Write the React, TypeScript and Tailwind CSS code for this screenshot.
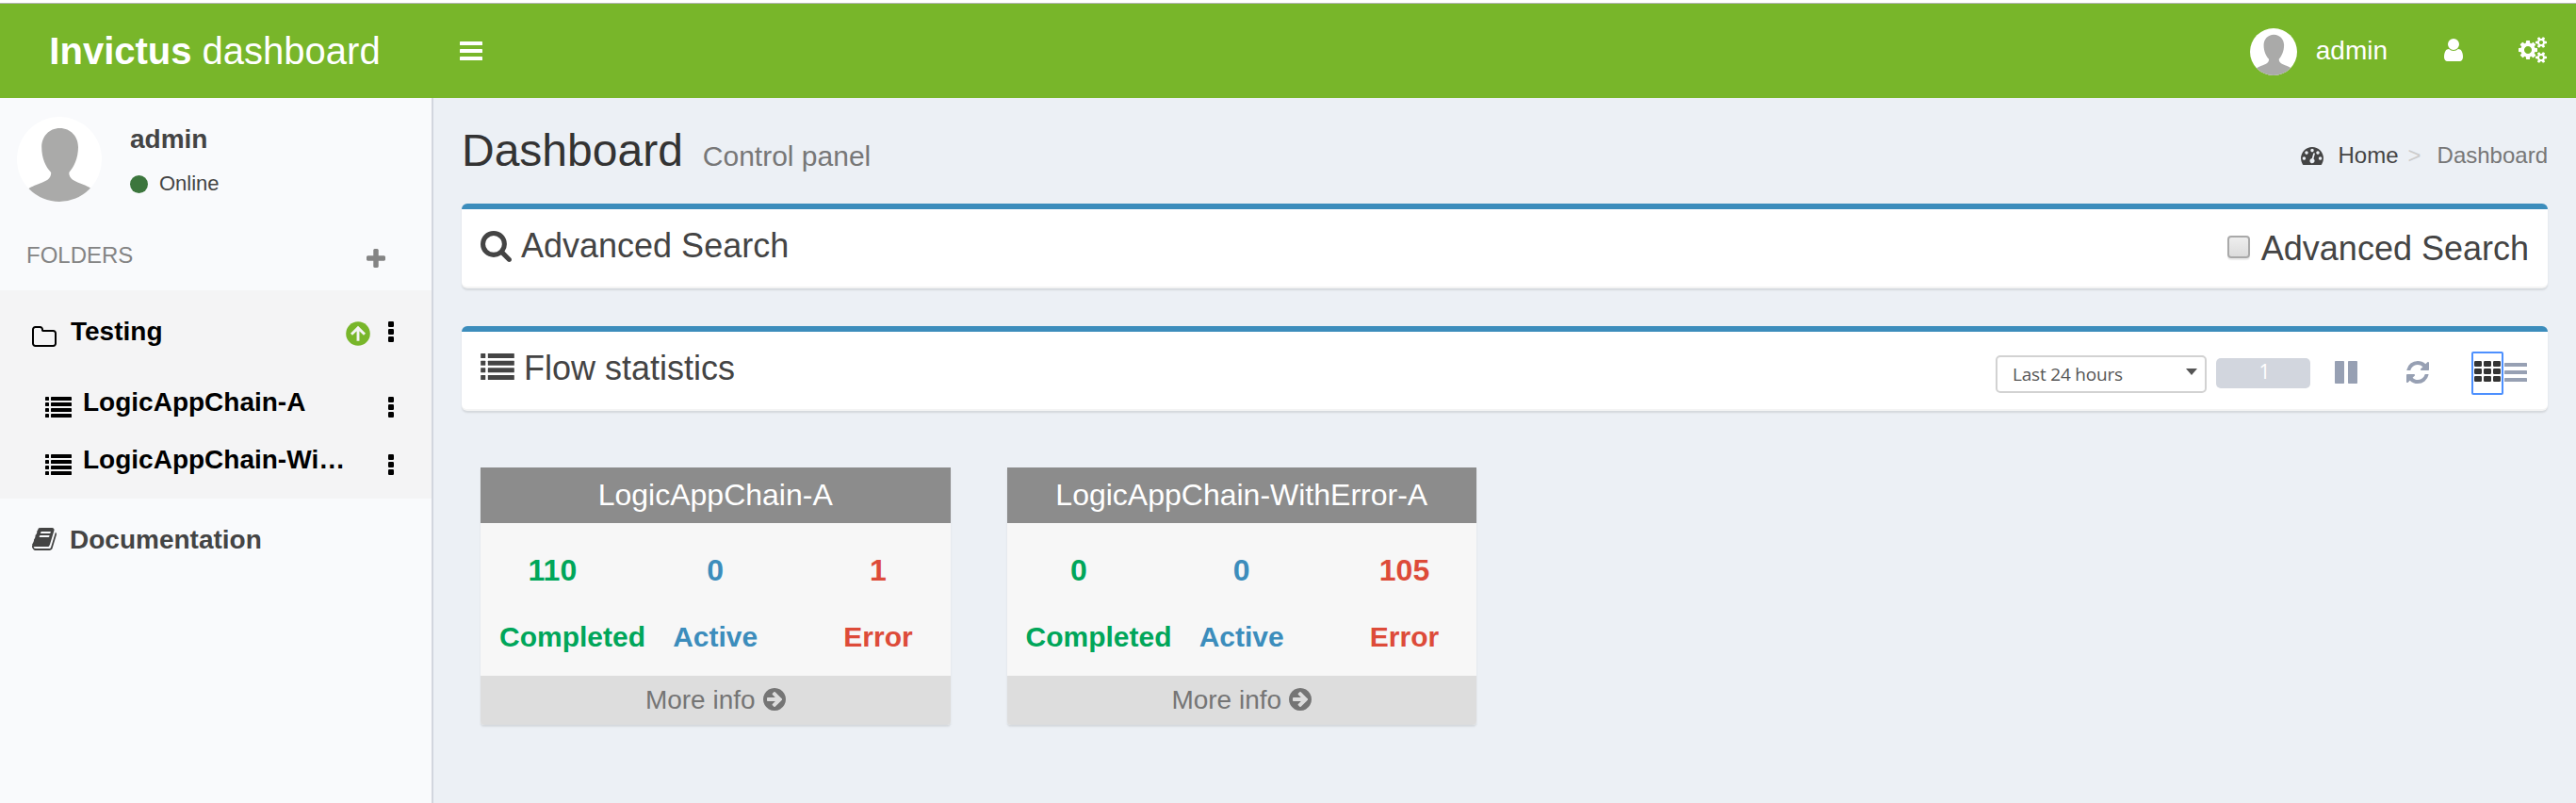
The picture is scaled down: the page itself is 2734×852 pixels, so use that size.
import React from "react";

type IconProps = { className: string };

const Bars = ({ className }: IconProps) => (
  <svg viewBox="0 0 24 20" className={className} fill="currentColor">
    <rect width="24" height="4" rx="0.6" />
    <rect y="8" width="24" height="4" rx="0.6" />
    <rect y="16" width="24" height="4" rx="0.6" />
  </svg>
);

const Search = ({ className }: IconProps) => (
  <svg viewBox="64 128 1664 1664" className={className} fill="currentColor">
    <path d="M1216 832q0-185-131.5-316.5t-316.5-131.5-316.5 131.5-131.5 316.5 131.5 316.5 316.5 131.5 316.5-131.5 131.5-316.5zm512 832q0 52-38 90t-90 38q-54 0-90-38l-343-342q-179 124-399 124-143 0-273.5-55.5t-225-150-150-225-55.5-273.5 55.5-273.5 150-225 225-150 273.5-55.5 273.5 55.5 225 150 150 225 55.5 273.5q0 220-124 399l343 343q37 37 37 90z" />
  </svg>
);

const User = ({ className }: IconProps) => (
  <svg viewBox="256 128 1280 1536" className={className} fill="currentColor">
    <path d="M1536 1399q0 109-62.5 187t-150.5 78h-854q-88 0-150.5-78t-62.5-187q0-85 8.5-160.5t31.5-152 58.5-131 94-89 134.5-34.5q131 128 313 128t313-128q76 0 134.5 34.5t94 89 58.5 131 31.5 152 8.5 160.5zm-256-887q0 159-112.5 271.5t-271.5 112.5-271.5-112.5-112.5-271.5 112.5-271.5 271.5-112.5 271.5 112.5 112.5 271.5z" />
  </svg>
);

const Cogs = ({ className }: IconProps) => (
  <svg viewBox="-64 0 1920 1792" className={className} fill="currentColor">
    <path d="M832 896q0-106-75-181t-181-75-181 75-75 181 75 181 181 75 181-75 75-181zm768 512q0-52-38-90t-90-38-90 38-38 90q0 53 37.5 90.5t90.5 37.5 90.5-37.5 37.5-90.5zm0-1024q0-52-38-90t-90-38-90 38-38 90q0 53 37.5 90.5t90.5 37.5 90.5-37.5 37.5-90.5zm-384 421v185q0 10-7 19.5t-16 10.5l-155 24q-11 35-32 76 34 48 90 115 7 11 7 20 0 12-7 19-23 30-82.5 89.5t-78.5 59.5q-11 0-21-7l-115-90q-37 19-77 31-11 108-23 155-7 24-30 24h-186q-11 0-20-7.5t-10-17.5l-23-153q-34-10-75-31l-118 89q-7 7-20 7-11 0-21-8-144-133-144-160 0-9 7-19 10-14 41-53t47-61q-23-44-35-82l-152-24q-10-1-17-9.5t-7-19.5v-185q0-10 7-19.5t16-10.5l155-24q11-35 32-76-34-48-90-115-7-11-7-20 0-12 7-20 22-30 82-89t79-59q11 0 21 7l115 90q34-18 77-32 11-108 23-154 7-24 30-24h186q11 0 20 7.5t10 17.5l23 153q34 10 75 31l118-89q8-7 20-7 11 0 21 8 144 133 144 160 0 8-7 19-12 16-42 54t-45 60q23 48 34 82l152 23q10 2 17 10.5t7 19.5zm640 533v140q0 16-149 31-12 27-30 52 51 113 51 138 0 4-4 7-122 71-124 71-8 0-46-47t-52-68q-20 2-30 2t-30-2q-14 21-52 68t-46 47q-2 0-124-71-4-3-4-7 0-25 51-138-18-25-30-52-149-15-149-31v-140q0-16 149-31 13-29 30-52-51-113-51-138 0-4 4-7 4-2 35-20t59-34 30-16q8 0 46 46.5t52 67.5q20-2 30-2t30 2q51-71 92-112l6-2q4 0 124 70 4 3 4 7 0 25-51 138 17 23 30 52 149 15 149 31zm0-1024v140q0 16-149 31-12 27-30 52 51 113 51 138 0 4-4 7-122 71-124 71-8 0-46-47t-52-68q-20 2-30 2t-30-2q-14 21-52 68t-46 47q-2 0-124-71-4-3-4-7 0-25 51-138-18-25-30-52-149-15-149-31v-140q0-16 149-31 13-29 30-52-51-113-51-138 0-4 4-7 4-2 35-20t59-34 30-16q8 0 46 46.5t52 67.5q20-2 30-2t30 2q51-71 92-112l6-2q4 0 124 70 4 3 4 7 0 25-51 138 17 23 30 52 149 15 149 31z" />
  </svg>
);

const Plus = ({ className }: IconProps) => (
  <svg viewBox="192 128 1408 1408" className={className} fill="currentColor">
    <path d="M1600 736v192q0 40-28 68t-68 28h-416v416q0 40-28 68t-68 28h-192q-40 0-68-28t-28-68v-416h-416q-40 0-68-28t-28-68v-192q0-40 28-68t68-28h416v-416q0-40 28-68t68-28h192q40 0 68 28t28 68v416h416q40 0 68 28t28 68z" />
  </svg>
);

const Folder = ({ className }: IconProps) => (
  <svg viewBox="64 128 1664 1408" className={className} fill="currentColor">
    <path d="M1600 1312v-704q0-40-28-68t-68-28h-704q-40 0-68-28t-28-68v-64q0-40-28-68t-68-28h-320q-40 0-68 28t-28 68v960q0 40 28 68t68 28h1216q40 0 68-28t28-68zm128-704v704q0 92-66 158t-158 66h-1216q-92 0-158-66t-66-158v-960q0-92 66-158t158-66h320q92 0 158 66t66 158v32h672q92 0 158 66t66 158z" />
  </svg>
);

const Dots = ({ className }: IconProps) => (
  <svg viewBox="0 0 6 22" className={className} fill="currentColor">
    <rect width="6" height="6" rx="1.2" />
    <rect y="8" width="6" height="6" rx="1.2" />
    <rect y="16" width="6" height="6" rx="1.2" />
  </svg>
);

const List = ({ className }: IconProps) => (
  <svg viewBox="0 0 28 22" className={className} fill="currentColor">
    {[0, 6, 12, 18].map((y) => (
      <g key={y}>
        <rect y={y} width="4" height="4" rx="0.4" />
        <rect x="6" y={y} width="22" height="4" rx="0.4" />
      </g>
    ))}
  </svg>
);

const Book = ({ className }: IconProps) => (
  <svg viewBox="64 128 1664 1536" className={className} fill="currentColor">
    <path d="M1703 478q40 57 18 129l-275 906q-19 64-76.5 107.5t-122.5 43.5h-923q-77 0-148.5-53.5t-99.5-131.5q-24-67-2-127 0-4 3-27t4-37q1-8-3-21.5t-3-19.5q2-11 8-21t16.5-23.5 16.5-23.5q23-38 45-91.5t30-91.5q3-10 .5-30t-.5-28q3-11 17-28t17-23q21-36 42-92t25-90q1-9-2.5-32t.5-28q4-13 22-30.5t22-22.5q19-26 42.5-84.5t27.5-96.5q1-8-3-25.5t-2-26.5q2-8 9-18t18-23 17-21q8-12 16.5-30.5t15-35 16-36 19.5-32 26.5-23.5 36-11.5 47.5 5.5l-1 3q38-9 51-9h761q74 0 114 56t18 130l-274 906q-36 119-71.5 153.5t-128.5 34.5h-869q-27 0-38 15-11 16-1 43 24 70 144 70h923q29 0 56-15.5t35-41.5l300-987q7-22 5-57 38 15 59 43zm-1064 2q-4 13 2 22.5t20 9.5h608q13 0 25.5-9.5t16.5-22.5l21-64q4-13-2-22.5t-20-9.5h-608q-13 0-25.5 9.5t-16.5 22.5zm-83 256q-4 13 2 22.5t20 9.5h608q13 0 25.5-9.5t16.5-22.5l21-64q4-13-2-22.5t-20-9.5h-608q-13 0-25.5 9.5t-16.5 22.5z" />
  </svg>
);

const Gauge = ({ className }: IconProps) => (
  <svg viewBox="0 256 1792 1408" className={className} fill="currentColor">
    <path d="M384 1152q0-53-37.5-90.5t-90.5-37.5-90.5 37.5-37.5 90.5 37.5 90.5 90.5 37.5 90.5-37.5 37.5-90.5zm192-448q0-53-37.5-90.5t-90.5-37.5-90.5 37.5-37.5 90.5 37.5 90.5 90.5 37.5 90.5-37.5 37.5-90.5zm428 481l101-382q6-26-7.5-48.5t-38.5-29.5-48 6.5-30 39.5l-101 382q-60 5-107 43.5t-63 98.5q-20 77 20 146t117 89 146-20 89-117q16-60-6-117t-72-91zm660-33q0-53-37.5-90.5t-90.5-37.5-90.5 37.5-37.5 90.5 37.5 90.5 90.5 37.5 90.5-37.5 37.5-90.5zm-640-640q0-53-37.5-90.5t-90.5-37.5-90.5 37.5-37.5 90.5 37.5 90.5 90.5 37.5 90.5-37.5 37.5-90.5zm448 192q0-53-37.5-90.5t-90.5-37.5-90.5 37.5-37.5 90.5 37.5 90.5 90.5 37.5 90.5-37.5 37.5-90.5zm320 448q0 261-141 483-19 29-54 29h-1402q-35 0-54-29-141-221-141-483 0-182 71-348t191-286 286-191 348-71 348 71 286 191 191 286 71 348z" />
  </svg>
);

const Pause = ({ className }: IconProps) => (
  <svg viewBox="0 0 24 24" className={className} fill="currentColor">
    <rect width="10" height="24" rx="0.8" />
    <rect x="14" width="10" height="24" rx="0.8" />
  </svg>
);

const Refresh = ({ className }: IconProps) => (
  <svg viewBox="128 128 1536 1536" className={className} fill="currentColor">
    <path d="M1639 1056q0 5-1 7-64 268-268 434.5t-478 166.5q-146 0-282.5-55t-243.5-157l-129 129q-19 19-45 19t-45-19-19-45v-448q0-26 19-45t45-19h448q26 0 45 19t19 45-19 45l-137 137q71 66 161 102t187 36q134 0 250-65t186-179q11-17 53-117 8-23 30-23h192q13 0 22.5 9.5t9.5 22.5zm25-800v448q0 26-19 45t-45 19h-448q-26 0-45-19t-19-45 19-45l138-138q-148-137-349-137-134 0-250 65t-186 179q-11 17-53 117-8 23-30 23h-199q-13 0-22.5-9.5t-9.5-22.5v-7q65-268 270-434.5t480-166.5q146 0 284 55.5t245 156.5l130-129q19-19 45-19t45 19 19 45z" />
  </svg>
);

const Tiles = ({ className }: IconProps) => (
  <svg viewBox="0 0 28 22" className={className} fill="currentColor">
    {[0, 8, 16].map((y) =>
      [0, 10, 20].map((x) => <rect key={`${x}-${y}`} x={x} y={y} width="8" height="6" rx="1.2" />)
    )}
  </svg>
);

const ArrowCircleRight = ({ className }: IconProps) => (
  <svg viewBox="128 128 1536 1536" className={className} fill="currentColor">
    <path
      transform="rotate(90 896 896)"
      d="M1412 895q0-27-18-45l-362-362-91-91q-18-18-45-18t-45 18l-91 91-362 362q-18 18-18 45t18 45l91 91q18 18 45 18t45-18l189-189v502q0 26 19 45t45 19h128q26 0 45-19t19-45v-502l189 189q19 19 45 19t45-19l91-91q18-18 18-45zm252 1q0 209-103 385.5t-279.5 279.5-385.5 103-385.5-103-279.5-279.5-103-385.5 103-385.5 279.5-279.5 385.5-103 385.5 103 279.5 279.5 103 385.5z"
    />
  </svg>
);

const ArrowCircleUp = ({ className }: IconProps) => (
  <svg viewBox="0 0 26 26" className={className}>
    <circle cx="13" cy="13" r="12.8" fill="#78b62a" />
    <path d="M13 20.800V7.500M6 13.800L13 6.900l7 6.900" fill="none" stroke="#f4f4f5" strokeWidth="2.900" />
  </svg>
);

const Avatar = ({ className }: IconProps) => (
  <svg viewBox="0 0 90 90" className={className}>
    <defs>
      <clipPath id="avatar-clip">
        <circle cx="45" cy="45" r="45" />
      </clipPath>
    </defs>
    <g clipPath="url(#avatar-clip)">
      <rect width="90" height="90" fill="#fff" />
      <path
        d="M45.500 12C57 12 65 21 65 32C65 44 60.500 53 55.300 59C55 66 62 68.500 67 70.500C72 72.500 78 74.500 80 77.500V90H11V77.500C13 74.500 20 72.500 24.500 70.500C30 68.500 36.500 66 36.200 59C30.500 53 26.200 44 26.200 32C26.200 21 34 12 45.500 12Z"
        fill="#aaaaa9"
      />
    </g>
  </svg>
);

type FlowItem = { name: string; completed: number; active: number; error: number };

const flows: FlowItem[] = [
  { name: "LogicAppChain-A", completed: 110, active: 0, error: 1 },
  { name: "LogicAppChain-WithError-A", completed: 0, active: 0, error: 105 },
];

function Stat({ value, label, color }: { value: number; label: string; color: string }) {
  return (
    <div className={`w-[172.800px] px-[30px] font-bold whitespace-nowrap ${color}`}>
      <div className="flex justify-center text-[32px] leading-[36px]">{value}</div>
      <div className="mt-[36px] flex justify-center-safe text-[30px] leading-[34px]">{label}</div>
    </div>
  );
}

function FlowCard({ flow }: { flow: FlowItem }) {
  return (
    <article className="w-[498.500px] overflow-hidden rounded-b-[4px] bg-[#f7f7f7] shadow-[0_2px_2px_rgba(0,0,0,0.1)]">
      <h3 className="h-[59px] bg-[#8c8c8c] pt-[11px] text-center text-[32px] leading-[36px] text-white">{flow.name}</h3>
      <div className="-mx-[10px] flex h-[162px] pt-[32px]">
        <Stat value={flow.completed} label="Completed" color="text-[#00a65a]" />
        <Stat value={flow.active} label="Active" color="text-[#3c8dbc]" />
        <Stat value={flow.error} label="Error" color="text-[#dd4b39]" />
      </div>
      <a className="flex h-[52px] items-start justify-center gap-[8px] bg-[#ddd] pt-[10px] text-[28px] leading-[32px] text-[#757575]">
        More info
        <ArrowCircleRight className="mt-[3px] h-[24px] w-[24px]" />
      </a>
    </article>
  );
}

function ChainRow({ label }: { label: string }) {
  return (
    <li className="flex h-[61px] items-start pt-px pr-[40px] pl-[48px]">
      <List className="mt-[10px] h-[22px] w-[28px]" />
      <span className="ml-[12px] grow text-[28px] leading-[32px]">{label}</span>
      <Dots className="mt-[10px] h-[22px] w-[6px]" />
    </li>
  );
}

export default function App() {
  return (
    <div className="flex h-[852px] w-[2734px] flex-col overflow-hidden bg-[#ecf0f5] font-['Liberation_Sans',Arial,sans-serif] text-[#444]">
      <div className="h-[4px] shrink-0 border-b border-[#b4b4b4] bg-white" />
      <header className="flex h-[100px] shrink-0 items-center bg-[#78b62a] text-white">
        <div className="w-[456px] text-center text-[40px] leading-[100px]">
          <b>Invictus</b> dashboard
        </div>
        <Bars className="ml-[32px] h-[20px] w-[24px]" />
        <div className="ml-auto flex items-center pr-[31px]">
          <Avatar className="mt-[2px] h-[50px] w-[50px]" />
          <span className="ml-[20px] text-[28px] leading-[40px]">admin</span>
          <User className="ml-[60px] h-[24px] w-[20px] -translate-y-px" />
          <Cogs className="ml-[59px] h-[28px] w-[30px] -translate-y-px" />
        </div>
      </header>

      <div className="flex grow">
        <aside className="w-[460px] shrink-0 border-r-2 border-[#d2d6de] bg-[#f9fafc]">
          <div className="flex h-[142px] pt-[20px] pl-[18px]">
            <Avatar className="h-[90px] w-[90px]" />
            <div className="ml-[30px] pt-[8px]">
              <p className="text-[28px] leading-[32px] font-bold">admin</p>
              <p className="mt-[18px] flex items-center text-[22px] leading-[26px]">
                <span className="mr-[12px] h-[19px] w-[19px] rounded-full bg-[#3c763d]" />
                Online
              </p>
            </div>
          </div>
          <div className="flex h-[62px] items-start justify-between pr-[49px] pl-[28px] pt-[11px] text-[24px] leading-[28px] text-[#848484]">
            <span>FOLDERS</span>
            <Plus className="mt-[7px] h-[20px] w-[20px]" />
          </div>
          <div className="h-[221px] bg-[#f4f4f5] font-bold text-black">
            <div className="flex h-[102px] items-start pt-[28px] pr-[40px] pl-[34px]">
              <Folder className="mt-[10px] h-[22px] w-[26px]" />
              <span className="ml-[15px] grow text-[28px] leading-[32px]">Testing</span>
              <ArrowCircleUp className="mt-[5px] h-[26px] w-[26px]" />
              <Dots className="mt-[5px] ml-[19px] h-[22px] w-[6px]" />
            </div>
            <ul>
              <ChainRow label="LogicAppChain-A" />
              <ChainRow label="LogicAppChain-Wi…" />
            </ul>
          </div>
          <div className="flex items-start pt-[28px] pl-[34px] text-[28px] leading-[32px] font-bold">
            <Book className="mt-[3px] h-[24px] w-[26px]" />
            <span className="ml-[14px]">Documentation</span>
          </div>
        </aside>

        <main className="grow pr-[30px] pl-[30px]">
          <div className="flex h-[112px] items-start justify-between">
            <h1 className="pt-[29px] text-[48px] leading-[54px] text-[#333]">
              Dashboard<small className="ml-[21px] text-[30px] text-[#777]">Control panel</small>
            </h1>
            <nav className="flex items-start pt-[47px] text-[24px] leading-[28px]">
              <Gauge className="mt-[5px] h-[19px] w-[24px]" />
              <span className="ml-[16px]">Home</span>
              <span className="ml-[10px] text-[#ccc]">&gt;</span>
              <span className="ml-[17px] text-[#777]">Dashboard</span>
            </nav>
          </div>

          <section className="flex h-[90px] items-start justify-between rounded-[6px] border-t-[6px] border-b-2 border-t-[#3c8dbc] border-b-[#f4f4f4] bg-white px-[20px] text-[36px] leading-[40px] shadow-[0_2px_2px_rgba(0,0,0,0.1)]">
            <h2 className="flex items-start pt-[19px]">
              <Search className="mt-[4px] mr-[10px] h-[33px] w-[33px]" />
              Advanced Search
            </h2>
            <label className="flex items-start pt-[22px]">
              <span className="mt-[6px] mr-[12px] h-[24px] w-[24px] rounded-[4px] border-2 border-[#a9a9a9] bg-linear-to-b from-[#eee] to-[#dcdcdc] shadow-[0_2px_1px_rgba(0,0,0,0.08)]" />
              Advanced Search
            </label>
          </section>

          <section className="mt-[40px] flex h-[90px] items-start justify-between rounded-[6px] border-t-[6px] border-b-2 border-t-[#3c8dbc] border-b-[#f4f4f4] bg-white pr-[22px] pl-[20px] shadow-[0_2px_2px_rgba(0,0,0,0.1)]">
            <h2 className="flex items-start pt-[19px] text-[36px] leading-[40px]">
              <List className="mt-[4px] mr-[10px] h-[28px] w-[36px]" />
              Flow statistics
            </h2>
            <div className="flex h-[46px] translate-y-[21px] items-center text-[#97a0b3]">
              <div className="mb-[-2px] flex h-[40px] w-[224px] items-center justify-between rounded-[5px] border-2 border-[#d2d2d2] pr-[8px] pl-[16px] font-['Open_Sans','Noto_Sans',sans-serif] text-[19px] tracking-[-0.200px] text-[#555]">
                <span className="pt-px">Last 24 hours</span>
                <svg viewBox="0 0 12 7" className="mb-[6px] h-[7px] w-[12px]">
                  <path d="M0 0h12L6 7z" fill="#555" />
                </svg>
              </div>
              <span className="ml-[10px] flex h-[32px] w-[100px] items-center justify-center rounded-[5px] bg-[#d2d6de] pb-[3px] pl-[3px] font-['Open_Sans','Noto_Sans',sans-serif] text-[21px] text-white">
                1
              </span>
              <Pause className="mb-[2px] ml-[26px] h-[24px] w-[24px]" />
              <Refresh className="mb-[2px] ml-[52px] h-[24px] w-[24px]" />
              <button className="ml-[45px] flex h-[46px] w-[34px] items-start justify-center rounded-[2px] border-2 border-[#4d90fe] pt-[8px] text-[#333]">
                <Tiles className="h-[22px] w-[28px] shrink-0" />
              </button>
              <Bars className="mb-[2px] ml-[1px] h-[20px] w-[24px]" />
            </div>
          </section>

          <div className="mt-[60px] flex gap-[60px] pl-[20px]">
            {flows.map((flow) => (
              <FlowCard key={flow.name} flow={flow} />
            ))}
          </div>
        </main>
      </div>
    </div>
  );
}
